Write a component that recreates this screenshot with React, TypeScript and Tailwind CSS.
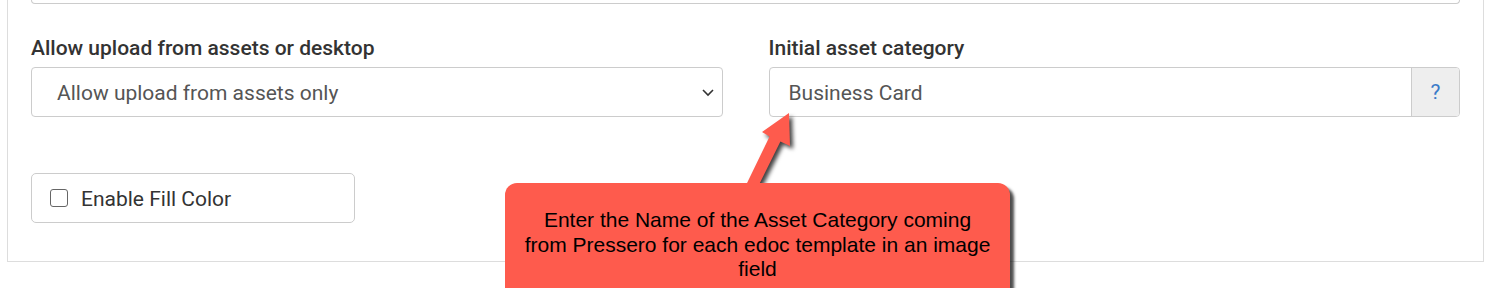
import React from 'react';

const Label: React.FC<{ children: React.ReactNode }> = ({ children }) => (
  <div className="text-[21px] leading-[24px] font-medium text-[#333] mb-[7px]">{children}</div>
);

const Callout: React.FC = () => (
  <>
    {/* Arrow */}
    <svg
      className="absolute left-0 top-0 pointer-events-none z-10"
      width="1505"
      height="288"
      style={{ filter: 'drop-shadow(3px 3px 2px rgba(0,0,0,0.75))' }}
    >
      <polygon
        points="745.6,186 756.4,190 780.4,141.6 790,146 789,113 762,132 769.6,136.4"
        fill="#fe5b4d"
      />
    </svg>
    {/* Box */}
    <div className="absolute left-[505px] top-[183px] w-[505px] h-[130px] rounded-[12px] bg-[#fe5b4d] shadow-[4px_4px_3px_rgba(0,0,0,0.7)] z-20 pt-[25px] px-[16px]">
      <p className="text-center text-black text-[21px] leading-[24.5px] font-['Liberation_Sans',Arial,sans-serif]">
        Enter the Name of the Asset Category coming from Pressero for each edoc template in an image field
      </p>
    </div>
  </>
);

export default function App() {
  return (
    <div className="relative w-[1505px] h-[288px] overflow-hidden bg-white font-['Roboto',sans-serif]">
      <div className="ml-[7px] w-[1477px] border-x border-b border-[#ddd] px-[23px] pb-[38px] flex flex-col">
        {/* previous field, scrolled off */}
        <div className="h-[4px] border-x border-b border-[#ccc] rounded-b-[4px]" />

        <div className="mt-[32px] grid grid-cols-2 gap-x-[46px]">
          <div>
            <Label>Allow upload from assets or desktop</Label>
            <div className="h-[50px] border border-[#ccc] rounded-[4px] flex items-center justify-between pl-[25px] pr-[6px]">
              <span className="pt-[3px] text-[21px] text-[#555]">Allow upload from assets only</span>
              <svg width="14" height="10" viewBox="0 0 14 10" className="mr-[1px]">
                <path d="M2 3l5 5 5-5" fill="none" stroke="#333" strokeWidth="1.6" />
              </svg>
            </div>
          </div>
          <div>
            <Label>Initial asset category</Label>
            <div className="h-[50px] border border-[#ccc] rounded-[4px] flex overflow-hidden">
              <div className="flex-1 flex items-center pt-[3px] pl-[19px] text-[21px] text-[#555]">Business Card</div>
              <div className="w-[48px] bg-[#eee] border-l border-[#ccc] flex items-center justify-center pt-[2px] text-[21px] text-[#3a7bc8]">
                ?
              </div>
            </div>
          </div>
        </div>

        <div className="mt-[56px] w-[324px] h-[50px] border border-[#ccc] rounded-[5px] flex items-center pl-[18px]">
          <span className="w-[18px] h-[18px] rounded-[3px] border-[1.5px] border-[#666] bg-white" />
          <span className="ml-[13px] pt-[3px] text-[21px] text-[#333]">Enable Fill Color</span>
        </div>
      </div>

      <Callout />
    </div>
  );
}
